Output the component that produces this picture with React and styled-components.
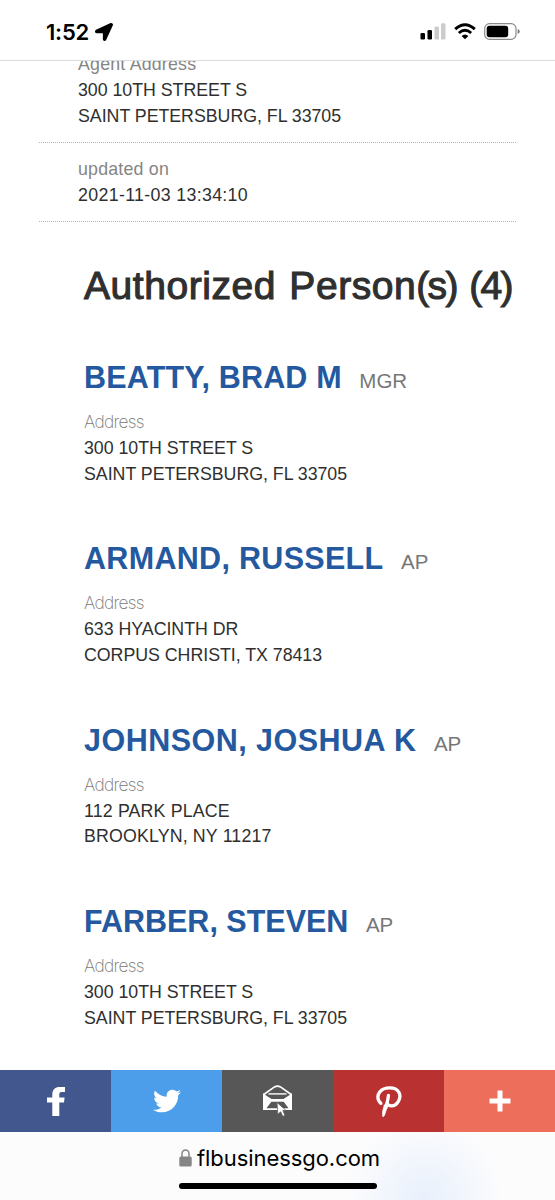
import React from 'react'
import styled, { createGlobalStyle } from 'styled-components'
import { FaLocationArrow, FaTwitter } from 'react-icons/fa'

const people = [
  {
    name: 'BEATTY, BRAD M',
    tracking: 0.18,
    role: 'MGR',
    street: '300 10TH STREET S',
    city: 'SAINT PETERSBURG, FL 33705',
  },
  {
    name: 'ARMAND, RUSSELL',
    tracking: 0.31,
    role: 'AP',
    street: '633 HYACINTH DR',
    city: 'CORPUS CHRISTI, TX 78413',
  },
  {
    name: 'JOHNSON, JOSHUA K',
    tracking: 0.48,
    role: 'AP',
    street: '112 PARK PLACE',
    city: 'BROOKLYN, NY 11217',
    lineTracking: 0.15,
  },
  {
    name: 'FARBER, STEVEN',
    tracking: 0,
    role: 'AP',
    street: '300 10TH STREET S',
    city: 'SAINT PETERSBURG, FL 33705',
  },
]

const FacebookIcon = () => (
  <svg width="18" height="29" viewBox="0 0 18 29" fill="#fff">
    <path d="M5.300 29V15.600H0V10.500H5.300V8C5.300 2.600 8 0 12.800 0H18V5H14.600C12.800 5 12.300 6 12.300 7.600V10.500H17.600L17 15.600H12.300V29Z" />
  </svg>
)

const MailIcon = () => (
  <svg width="30" height="32" viewBox="0 0 30 32" fill="none">
    <path d="M0.800 9.500L11.500 1.900Q14.500 0.300 17.500 1.900L28.200 9.500" stroke="#fff" strokeWidth="1.700" />
    <path d="M0 8.300L5 11.800L8.800 14H20.200L24 11.800L29 8.300V25H0Z" fill="#fff" />
    <path d="M5.500 8.900H23.500" stroke="#fff" strokeWidth="1.400" />
    <path d="M5.800 10.300H23.200Q22.500 13.600 19.500 13.800H9.500Q6.500 13.600 5.800 10.300Z" fill="#575757" />
    <path d="M8.300 16.800H20.700L25.500 23.200H3.500Z" fill="#575757" />
    <path
      d="M14 17.500L23 25.500H19.800L22 30.500L19.700 31.300L17.700 26.800L14.800 29.300Z"
      fill="#fff"
      stroke="#575757"
      strokeWidth="0.700"
    />
  </svg>
)

const PinterestIcon = () => (
  <svg width="26" height="31" viewBox="0 0 26 31" fill="none" stroke="#fff" strokeLinecap="round">
    <path
      d="M4.800 17.300C1 14 1.200 8.800 3.800 5.800C8 0.800 19.500 0.300 22.900 6.200C26 12.500 21 19.800 15.500 19.800C13.200 19.800 11.800 19 11 17.500"
      strokeWidth="3.300"
    />
    <path d="M12.400 9.500C12.200 13 10.800 18 10 21.500" strokeWidth="3.300" />
    <path d="M8.200 19H12L8.500 29.500Q7.500 31 6.600 30.600Q5.600 26.500 8.200 19Z" fill="#fff" strokeWidth="0.500" />
  </svg>
)

const PlusIcon = () => (
  <svg width="22" height="22" viewBox="0 0 22 22" fill="#fff">
    <path d="M8.500 0.500h5v8h8v5h-8v8h-5v-8h-8v-5h8z" />
  </svg>
)

const LockIcon = () => (
  <svg width="13" height="18" viewBox="0 0 13 18">
    <path d="M3 8.500V4.800a3.500 3.800 0 0 1 7 0V8.500" fill="none" stroke="#858585" strokeWidth="1.500" />
    <rect x="0.300" y="7.600" width="12.400" height="10" rx="1.600" fill="#858585" />
  </svg>
)

const SignalIcon = () => (
  <svg width="26" height="17" viewBox="0 0 26 17">
    <rect x="0.500" y="10" width="4.500" height="6.500" rx="1.300" fill="#000" />
    <rect x="7.500" y="7" width="4.500" height="9.500" rx="1.300" fill="#000" />
    <rect x="14.500" y="3.500" width="4.500" height="13" rx="1.300" fill="#ccc" />
    <rect x="21" y="0.300" width="4.500" height="16.200" rx="1.300" fill="#ccc" />
  </svg>
)

const WifiIcon = () => (
  <svg width="22" height="17" viewBox="0 0 22 17" fill="none" stroke="#000">
    <path d="M1.200 6.200Q11 -2.800 20.800 6.200" strokeWidth="3" />
    <path d="M4.800 10Q11 4.500 17.200 10" strokeWidth="2.800" />
    <path d="M7.600 12.900Q11 9.900 14.400 12.900L11 16.300Z" fill="#000" stroke="none" />
  </svg>
)

const BatteryIcon = () => (
  <svg width="36" height="17" viewBox="0 0 36 17">
    <rect x="0.700" y="0.700" width="31.300" height="15.600" rx="4.800" fill="none" stroke="#8b8b8b" strokeWidth="1.200" />
    <rect x="2.700" y="2.700" width="21.500" height="11.600" rx="2.800" fill="#000" />
    <path d="M33.700 6q2 .8 2 2.500t-2 2.500z" fill="#777" />
  </svg>
)

const App = () => {
  return (
    <Page>
      <GlobalStyle />
      <StatusBar>
        <Clock>
          1:52
          <FaLocationArrow size={18} />
        </Clock>
        <StatusIcons>
          <SignalIcon />
          <WifiIcon />
          <BatteryIcon />
        </StatusIcons>
      </StatusBar>

      <Content>
        <Details>
          <DetailRow>
            <dt>Agent Address</dt>
            <dd>300 10TH STREET S</dd>
            <dd>SAINT PETERSBURG, FL 33705</dd>
          </DetailRow>
          <DetailRow $tracking={0.33}>
            <dt>updated on</dt>
            <dd>2021-11-03 13:34:10</dd>
          </DetailRow>
        </Details>

        <Persons>
          <Title>
            Authorized Person<span>(s) (4)</span>
          </Title>
          {people.map((person) => (
            <Person key={person.name}>
              <PersonName $tracking={person.tracking}>
                <a>{person.name}</a>
                <small>{person.role}</small>
              </PersonName>
              <AddressLabel>Address</AddressLabel>
              <AddressLine $tracking={person.lineTracking}>{person.street}</AddressLine>
              <AddressLine $tracking={person.lineTracking}>{person.city}</AddressLine>
            </Person>
          ))}
        </Persons>
      </Content>

      <ShareBar>
        <ShareButton $color="#43578f">
          <FacebookIcon />
        </ShareButton>
        <ShareButton $color="#4c9eea">
          <FaTwitter size={28} />
        </ShareButton>
        <ShareButton $color="#575757">
          <MailIcon />
        </ShareButton>
        <ShareButton $color="#b93130">
          <PinterestIcon />
        </ShareButton>
        <ShareButton $color="#ed6f5b">
          <PlusIcon />
        </ShareButton>
      </ShareBar>

      <BrowserBar>
        <Url>
          <LockIcon />
          flbusinessgo.com
        </Url>
        <HomeIndicator />
      </BrowserBar>
    </Page>
  )
}

const GlobalStyle = createGlobalStyle`
  * {
    box-sizing: border-box;
  }
  body {
    margin: 0;
    background: #fff;
  }
`

const Page = styled.div`
  width: 555px;
  height: 1200px;
  display: flex;
  flex-direction: column;
  overflow: hidden;
  background: #fff;
  font-family: 'Liberation Sans', Arial, sans-serif;
  color: #2f2f2f;
`

const StatusBar = styled.header`
  height: 61px;
  flex: none;
  display: flex;
  justify-content: space-between;
  padding: 20px 35px 0 46px;
  border-bottom: 1px solid #dcdcdc;
`

const Clock = styled.div`
  height: 23px;
  display: flex;
  align-items: center;
  gap: 6px;
  font-family: Inter, sans-serif;
  font-size: 22px;
  font-weight: 600;
  letter-spacing: -0.2px;
  color: #000;
`

const StatusIcons = styled.div`
  height: 23px;
  display: flex;
  align-items: center;
  gap: 8px;
`

const Content = styled.main`
  flex: 1;
  min-height: 0;
  overflow: hidden;
`

/* scrolled slightly under the status bar */
const Details = styled.dl`
  margin: -9px 39px 0;
`

const DetailRow = styled.div`
  padding: 14px 39px 12.4px;
  border-bottom: 1px dotted #b5b5b5;
  font-size: 17.8px;
  line-height: 25.8px;

  &:first-child {
    padding-top: 0;
  }
  dt {
    color: #858585;
    letter-spacing: 0.2px;
  }
  dd {
    margin: 0;
    letter-spacing: ${(props) => props.$tracking || -0.03}px;
  }
`

const Persons = styled.section`
  padding-left: 84px;
`

const Title = styled.h2`
  margin: 39px 0 46px;
  font-size: 39px;
  font-weight: 400;
  line-height: 50px;
  letter-spacing: 0.55px;
  word-spacing: 2px;
  white-space: nowrap;
  -webkit-text-stroke: 1.1px #2f2f2f;

  span {
    letter-spacing: -1.6px;
    word-spacing: 3px;
  }
`

const Person = styled.article`
  height: 181.4px;
`

const PersonName = styled.h3`
  margin: 0 0 12px;
  height: 40px;
  display: flex;
  align-items: baseline;
  gap: 17.5px;
  font-size: 30.5px;
  line-height: 40px;
  white-space: nowrap;

  a {
    color: #24599f;
    letter-spacing: ${(props) => props.$tracking}px;
  }
  small {
    font-size: 20.5px;
    font-weight: 400;
    color: #777;
  }
`

const AddressLabel = styled.div`
  margin-bottom: 1.3px;
  font-family: Inter, sans-serif;
  font-size: 17.3px;
  font-weight: 200;
  line-height: 25.8px;
  letter-spacing: -0.7px;
  color: #777;
`

const AddressLine = styled.div`
  font-size: 17.8px;
  line-height: 25.8px;
  letter-spacing: ${(props) => props.$tracking || -0.03}px;
`

const ShareBar = styled.nav`
  height: 62px;
  flex: none;
  display: grid;
  grid-template-columns: repeat(5, 1fr);
`

const ShareButton = styled.a`
  display: flex;
  align-items: center;
  justify-content: center;
  color: #fff;
  background: ${(props) => props.$color};
`

const BrowserBar = styled.footer`
  height: 68px;
  flex: none;
  display: flex;
  flex-direction: column;
  align-items: center;
  padding-top: 12px;
  background: radial-gradient(circle at 425px 66px, #e8f0fc 0, #fcfcfd 78px);
`

const Url = styled.div`
  height: 28px;
  display: flex;
  align-items: center;
  gap: 5px;
  padding-left: 4px;
  font-family: Inter, sans-serif;
  font-size: 22px;
  letter-spacing: -0.06px;
  color: #000;
`

const HomeIndicator = styled.div`
  width: 198px;
  height: 6px;
  margin-top: 11px;
  border-radius: 3px;
  background: #000;
`

export default App
